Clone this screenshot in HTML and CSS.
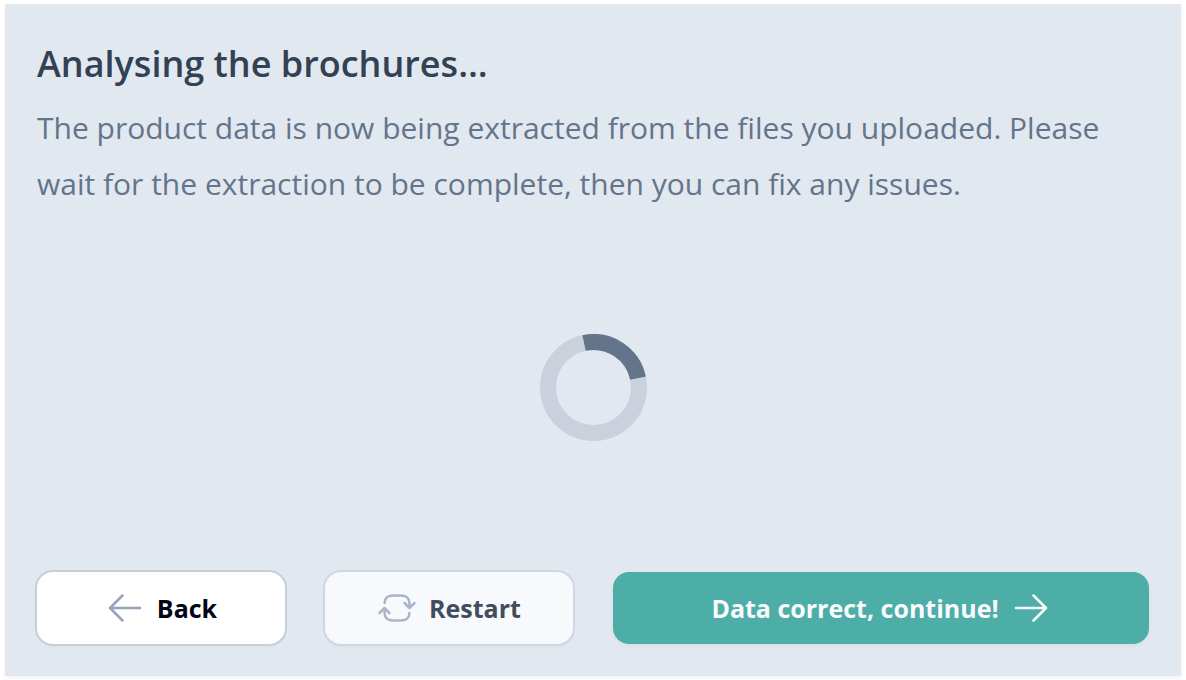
FILE: index.html
```
<!DOCTYPE html>
<html lang="en">
<head>
<meta charset="utf-8">
<meta name="viewport" content="width=device-width, initial-scale=1">
<title>Analysing the brochures…</title>
<link rel="stylesheet" href="styles.css">
</head>
<body>
<main class="panel">
  <header class="intro">
    <h1 class="title">Analysing the brochures…</h1>
    <p class="description">The product data is now being extracted from the files you uploaded. Please wait for the extraction to be complete, then you can fix any issues.</p>
  </header>
  <div class="progress" role="status" aria-label="Extracting">
    <svg class="spinner" viewBox="0 0 107 107" aria-hidden="true">
      <circle class="spinner-track" cx="53.5" cy="53.5" r="45.5"/>
      <circle class="spinner-arc" cx="53.5" cy="53.5" r="45.5" pathLength="100" stroke-dasharray="25 75" transform="rotate(-102 53.5 53.5)"/>
    </svg>
  </div>
  <div class="actions">
    <button class="button" type="button">
      <svg class="icon" viewBox="0 0 24 24" aria-hidden="true"><path d="M10.5 19.5 3 12m0 0 7.5-7.5M3 12h18"/></svg>
      Back
    </button>
    <button class="button button-muted" type="button">
      <svg class="icon" viewBox="0 0 24 24" aria-hidden="true"><path d="M19.5 12c0-1.232-.046-2.453-.138-3.662a4.006 4.006 0 0 0-3.7-3.7 48.678 48.678 0 0 0-7.324 0 4.006 4.006 0 0 0-3.7 3.7c-.017.22-.032.441-.046.662M19.5 12l3-3m-3 3-3-3m-12 3c0 1.232.046 2.453.138 3.662a4.006 4.006 0 0 0 3.7 3.7 48.656 48.656 0 0 0 7.324 0 4.006 4.006 0 0 0 3.7-3.7c.017-.22.032-.441.046-.662M4.5 12l3 3m-3-3-3 3"/></svg>
      Restart
    </button>
    <button class="button button-primary" type="button">
      Data correct, continue!
      <svg class="icon" viewBox="0 0 24 24" aria-hidden="true"><path d="M13.5 4.5 21 12m0 0-7.5 7.5M21 12H3"/></svg>
    </button>
  </div>
</main>
</body>
</html>
```
FILE: styles.css
```
* {
  box-sizing: border-box;
}

body {
  margin: 0;
  min-height: 100vh;
  display: flex;
  padding: 4px 5px;
  background: #fff;
  font-family: "Open Sans", "Noto Sans", sans-serif;
}

.panel {
  flex: 1;
  display: flex;
  flex-direction: column;
  padding: 32px;
  background: #e1e8f0;
  box-shadow: 0 2px 4px rgb(0 0 0 / 5%);
}

.title {
  margin: 0;
  color: #334155;
  font-size: 36px;
  font-weight: 600;
  line-height: 56px;
}

.description {
  margin: 8px 0 0;
  color: #64748b;
  font-size: 30px;
  line-height: 56px;
}

.progress {
  flex: 1;
  display: flex;
  align-items: center;
  justify-content: center;
  padding-bottom: 10px;
}

.spinner {
  width: 107px;
  fill: none;
  stroke-width: 16;
}

.spinner-track {
  stroke: #cad1dd;
}

.spinner-arc {
  stroke: #64748b;
}

.actions {
  display: grid;
  grid-template-columns: repeat(4, 1fr);
  gap: 40px;
}

.button {
  display: flex;
  align-items: center;
  justify-content: center;
  gap: 12px;
  min-height: 72px;
  padding: 0;
  border: 0;
  border-radius: 16px;
  background: #fff;
  box-shadow: 0 0 0 2px #c7ced9, 0 3px 4px rgb(0 0 0 / 3%);
  color: #020617;
  font: inherit;
  font-size: 25px;
  font-weight: 700;
  white-space: nowrap;
}

.button-muted {
  background: #f7f9fd;
  box-shadow: 0 0 0 2px #d0d7e0, 0 3px 4px rgb(0 0 0 / 3%);
  color: #434c5c;
}

.button-primary {
  grid-column: span 2;
  background: #4dada7;
  box-shadow: 0 2px 4px rgb(0 0 0 / 4%);
  color: #f8fafc;
}

.icon {
  flex: none;
  width: 40px;
  height: 40px;
  fill: none;
  stroke: #94a3b8;
  stroke-width: 1.5;
  stroke-linecap: round;
  stroke-linejoin: round;
}

.button-muted .icon {
  stroke: #aab6c8;
}

.button-primary .icon {
  stroke: currentColor;
}
```
